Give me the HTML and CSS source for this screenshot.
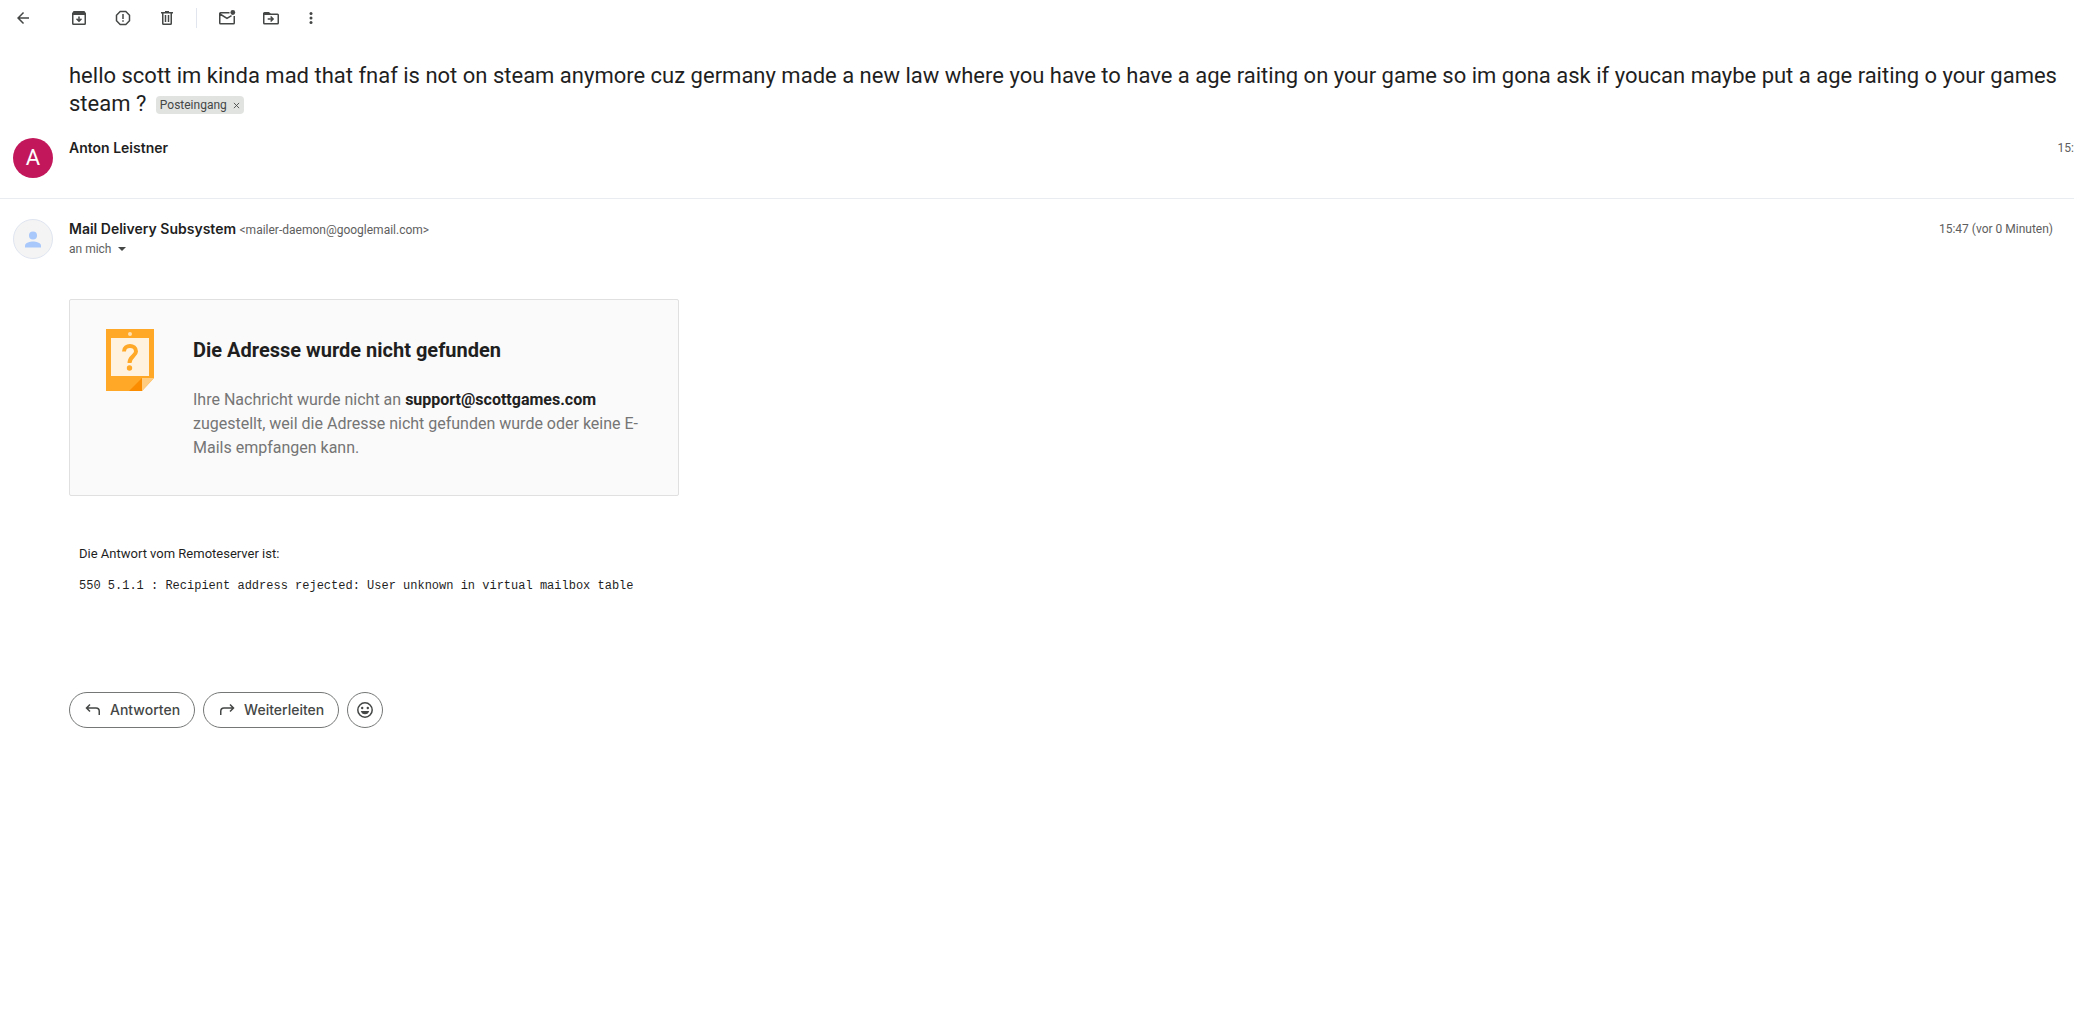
FILE: index.html
```html
<!DOCTYPE html>
<html lang="de">
<head>
<meta charset="utf-8">
<meta name="viewport" content="width=device-width, initial-scale=1">
<title>Posteingang</title>
<link rel="stylesheet" href="styles.css">
</head>
<body>
<header class="toolbar">
  <button class="tool tool-back" aria-label="Zurück"><svg class="icon" viewBox="0 0 24 24"><path d="M20 11H7.830l5.590-5.590L12 4l-8 8 8 8 1.410-1.410L7.830 13H20z"/></svg></button>
  <button class="tool" aria-label="Archivieren"><svg class="icon" viewBox="0 0 20 20"><path fill-rule="evenodd" d="M4.600 3h10.800L17 5.200V15.500q0 1.500-1.500 1.500h-11Q3 17 3 15.500V5.200zM4.500 7v8.500h11V7zM9.250 8.500h1.500v2.900l1.200-1.200 1.050 1.050L10 14.250l-3-3 1.050-1.050 1.200 1.200z"/></svg></button>
  <button class="tool" aria-label="Spam melden"><svg class="icon" viewBox="0 0 20 20"><path fill="none" stroke="currentColor" stroke-width="1.500" d="M7.200 3.500h5.600l3.700 3.700v5.600l-3.700 3.700H7.200l-3.700-3.700V7.200z"/><path d="M9.250 6h1.500v5h-1.500zM9.250 12.300h1.500v1.500h-1.500z"/></svg></button>
  <button class="tool" aria-label="Löschen"><svg class="icon" viewBox="0 0 20 20"><path fill-rule="evenodd" d="M8 3h4v1h4v1.500h-1V15.500q0 1.500-1.500 1.500h-7Q5 17 5 15.500v-10H4V4h4zM6.500 5.500v10h7v-10zM7.750 7h1.500v7h-1.500zM10.750 7h1.500v7h-1.500z"/></svg></button>
  <span class="tool-divider"></span>
  <button class="tool" aria-label="Als ungelesen markieren"><svg class="icon" viewBox="0 0 20 20"><path fill="none" stroke="currentColor" stroke-width="1.500" d="M12.500 4.750H3.500q-.75 0-.75.75v9.500q0 .75.75.75h13q.75 0 .75-.75V8M3 6l7 4.300 4.500-2.700"/><circle cx="15.800" cy="4.500" r="2.400"/></svg></button>
  <button class="tool" aria-label="Verschieben"><svg class="icon" viewBox="0 0 20 20"><path fill="none" stroke="currentColor" stroke-width="1.500" d="M2.750 5v10q0 .75.75.75h13q.75 0 .75-.75V7q0-.75-.75-.75H3"/><path d="M2 6V5.500Q2 4 3.500 4H8l2 2v1H2zM6.700 10.250h3.600L9.100 9.050 10.150 8l3 3-3 3-1.050-1.050 1.200-1.200H6.700z"/></svg></button>
  <button class="tool tool-more" aria-label="Mehr"><svg class="icon" viewBox="0 0 20 20"><circle cx="10" cy="5.500" r="1.500"/><circle cx="10" cy="10" r="1.500"/><circle cx="10" cy="14.500" r="1.500"/></svg></button>
</header>

<main>
  <h1 class="subject">hello scott im kinda mad that fnaf is not on steam anymore cuz germany made a new law where you have to have a age raiting on your game so im gona ask if youcan maybe put a age raiting o your games steam ? <span class="label">Posteingang<button class="label-remove" aria-label="Label entfernen"><svg class="cross" viewBox="0 0 8 8"><path d="M1 1l6 6M7 1L1 7"/></svg></button></span></h1>

  <article class="message message-collapsed">
    <div class="avatar avatar-letter">A</div>
    <div class="sender-line"><span class="sender">Anton Leistner</span></div>
    <time class="time">15:</time>
  </article>

  <article class="message message-open">
    <div class="avatar avatar-person"><svg class="person" viewBox="0 0 16 16"><circle cx="8" cy="4" r="4"/><path d="M0 16v-2c0-2.700 5.300-4 8-4s8 1.300 8 4v2z"/></svg></div>
    <div class="sender-block">
      <div class="sender-line"><span class="sender">Mail Delivery Subsystem</span> <span class="address">&lt;mailer-daemon@googlemail.com&gt;</span></div>
      <button class="recipient">an mich<span class="caret"></span></button>
    </div>
    <time class="time">15:47 (vor 0 Minuten)</time>
  </article>

  <div class="content">
    <section class="notice">
      <svg class="notice-icon" viewBox="0 0 48 62"><path fill="#ffa726" d="M0 0h48v49L36 62H0z"/><path fill="#fff3e0" d="M5 9h38v38H5z"/><circle cx="24" cy="5" r="2" fill="#ffe0b2"/><path fill="#ffcc80" d="M36 49h12L36 62z"/><path fill="#fb8c00" d="M36 49v13H23z"/><path fill="none" stroke="#ffa726" stroke-width="4" d="M18 22.500c0-7.300 12-7.300 12 0 0 4.500-6.500 4.800-6.500 11.500"/><circle cx="23.500" cy="39" r="2.700" fill="#ffa726"/></svg>
      <div class="notice-body">
        <h2 class="notice-title">Die Adresse wurde nicht gefunden</h2>
        <p class="notice-text">Ihre Nachricht wurde nicht an <strong class="failed">support@scottgames.com</strong> zugestellt, weil die Adresse nicht gefunden wurde oder keine E-Mails empfangen kann.</p>
      </div>
    </section>

    <section class="response">
      <p class="response-intro">Die Antwort vom Remoteserver ist:</p>
      <p class="response-code">550 5.1.1 : Recipient address rejected: User unknown in virtual mailbox table</p>
    </section>

    <div class="actions">
      <button class="action"><svg class="action-icon" viewBox="0 0 20 20"><path d="M7 4.500L3.500 8 7 11.500M4 8h9q3.250 0 3.250 3.250V15"/></svg>Antworten</button>
      <button class="action"><svg class="action-icon" viewBox="0 0 20 20"><path d="M13 4.500L16.500 8 13 11.500M16 8H7q-3.250 0-3.250 3.250V15"/></svg>Weiterleiten</button>
      <button class="action action-emoji" aria-label="Reaktion hinzufügen"><svg class="action-icon" viewBox="0 0 20 20"><circle cx="10" cy="10" r="7.200"/><path class="solid" d="M5.800 11h8.400c-.5 2-2 3.300-4.200 3.300S6.300 13 5.800 11z"/><circle class="solid" cx="7.200" cy="8" r="1.200"/><circle class="solid" cx="12.800" cy="8" r="1.200"/></svg></button>
    </div>
  </div>
</main>
</body>
</html>
```
FILE: styles.css
```css
* {
  box-sizing: border-box;
}

body {
  margin: 0;
  background: #fff;
  color: #1f1f1f;
  font-family: Roboto, Arial, sans-serif;
  font-size: 14px;
  line-height: 20px;
  overflow-x: hidden;
}

h1, h2, p {
  margin: 0;
}

button {
  margin: 0;
  padding: 0;
  border: 0;
  background: none;
  color: inherit;
  font: inherit;
  cursor: pointer;
}

.toolbar {
  display: flex;
  align-items: center;
  height: 36px;
  padding-left: 1px;
  color: #444746;
}

.tool {
  display: flex;
  align-items: center;
  justify-content: center;
  width: 44px;
  height: 36px;
}

.tool-back {
  margin-right: 12px;
}

.tool-back .icon {
  width: 18px;
  height: 18px;
}

.tool-more {
  width: 36px;
}

.tool-divider {
  width: 1px;
  height: 20px;
  margin: 0 8px 0 7px;
  background: #e1e6ee;
}

.icon {
  width: 20px;
  height: 20px;
  fill: currentColor;
}

.subject {
  padding: 26px 0 20px 69px;
  font-size: 22px;
  font-weight: 400;
  line-height: 28px;
}

.label {
  display: inline-flex;
  align-items: center;
  gap: 6px;
  height: 18px;
  margin-left: 4px;
  padding: 0 4px;
  border-radius: 4px;
  background: #e1e3e1;
  color: #444746;
  font-size: 12px;
  line-height: 18px;
  vertical-align: middle;
}

.label-remove {
  display: flex;
}

.cross {
  width: 7px;
  height: 7px;
  fill: none;
  stroke: #444746;
}

.message {
  display: flex;
  gap: 16px;
  padding-left: 13px;
}

.message-collapsed {
  height: 61px;
  border-bottom: 1px solid #e9edf2;
}

.message-open {
  padding-top: 20px;
  padding-right: 21px;
}

.avatar {
  display: flex;
  flex: none;
  align-items: center;
  justify-content: center;
  width: 40px;
  height: 40px;
  border-radius: 50%;
}

.avatar-letter {
  background: #c2185b;
  color: #fff;
  font-size: 22px;
}

.avatar-person {
  border: 1px solid #dfe5f0;
  background: #f4f4f4;
}

.person {
  width: 16px;
  height: 17px;
  fill: #a8c7fa;
}

.sender-line {
  height: 20px;
}

.sender {
  font-family: Inter, Roboto, sans-serif;
  font-size: 14px;
  font-weight: 600;
}

.address,
.recipient,
.time {
  color: #5e5e5e;
  font-size: 12px;
}

.recipient {
  display: flex;
  align-items: center;
  gap: 7px;
  line-height: 20px;
}

.caret {
  border: 4px solid transparent;
  border-top-color: #444746;
  border-bottom: 0;
}

.time {
  margin-left: auto;
  white-space: nowrap;
}

.content {
  padding: 40px 20px 0 69px;
}

.notice {
  display: flex;
  gap: 39px;
  max-width: 610px;
  padding: 29px 36px 35px;
  border: 1px solid #e0e0e0;
  border-radius: 2px;
  background: #fafafa;
}

.notice-icon {
  flex: none;
  width: 48px;
  height: 62px;
}

.notice-title {
  padding-top: 8px;
  font-size: 20px;
  font-weight: 700;
  line-height: 26px;
}

.notice-text {
  padding-top: 25px;
  color: #757575;
  font-size: 16px;
  line-height: 24px;
}

.failed {
  color: #212121;
}

.response {
  padding: 48px 10px 0;
}

.response-intro {
  font-size: 13px;
}

.response-code {
  padding-top: 12px;
  font-family: "Liberation Mono", monospace;
  font-size: 12px;
}

.actions {
  display: flex;
  gap: 8px;
  padding-top: 96px;
}

.action {
  display: flex;
  align-items: center;
  gap: 7px;
  height: 36px;
  padding: 0 14px 0 13px;
  border: 1px solid #747775;
  border-radius: 18px;
  color: #444746;
  font-family: Inter, Roboto, sans-serif;
  font-size: 14px;
  font-weight: 500;
}

.action-emoji {
  justify-content: center;
  width: 36px;
  padding: 0;
}

.action-icon {
  width: 20px;
  height: 20px;
  fill: none;
  stroke: currentColor;
  stroke-width: 1.5;
}

.solid {
  fill: currentColor;
  stroke: none;
}
```
